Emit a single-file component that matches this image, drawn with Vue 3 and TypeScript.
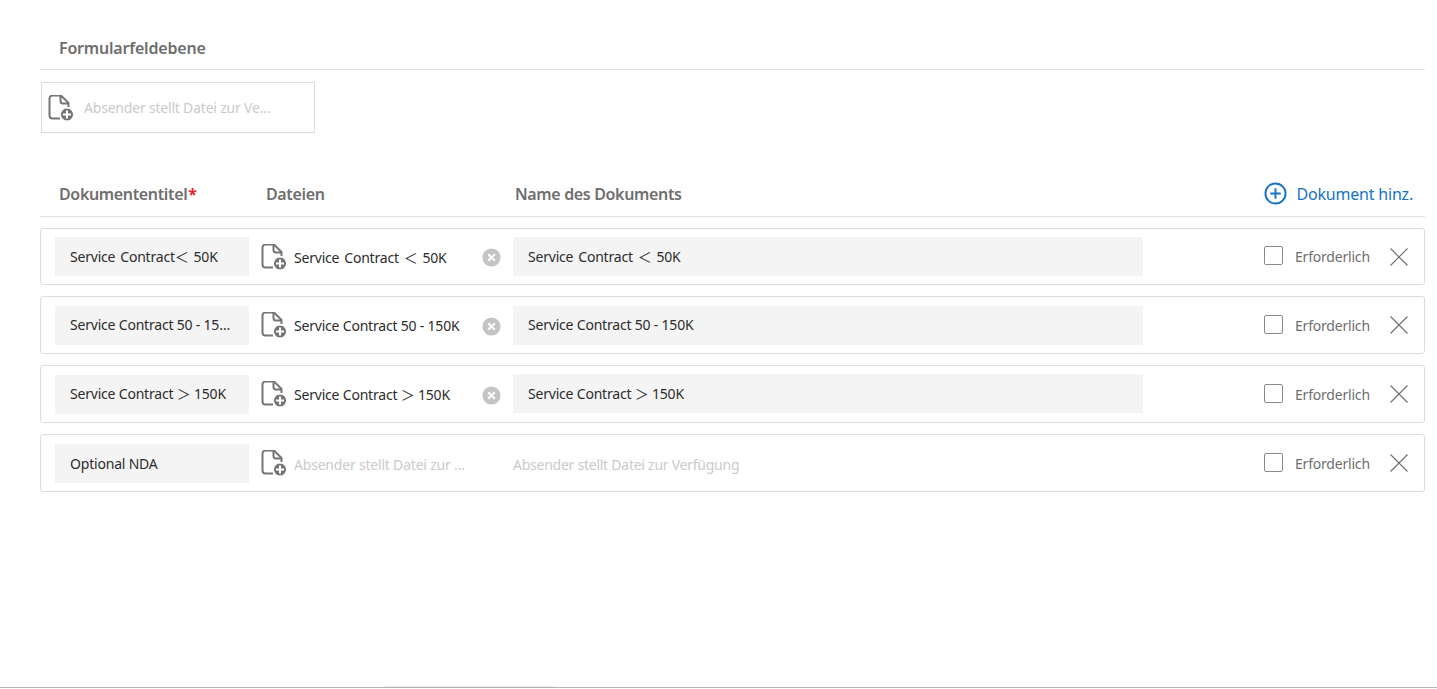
<script setup lang="ts">
interface Doc {
  title: string;
  file: string;
  name: string;
  empty?: boolean;
}

const docs: Doc[] = [
  { title: 'Service Contract＜ 50K', file: 'Service Contract ＜ 50K', name: 'Service Contract ＜ 50K' },
  { title: 'Service Contract 50 - 150K', file: 'Service Contract 50 - 150K', name: 'Service Contract 50 - 150K' },
  { title: 'Service Contract ＞ 150K', file: 'Service Contract ＞ 150K', name: 'Service Contract ＞ 150K' },
  { title: 'Optional NDA', file: 'Absender stellt Datei zur Verfügung', name: 'Absender stellt Datei zur Verfügung', empty: true },
];
</script>

<template>
  <div class="page">
    <h2 class="section">Formularfeldebene</h2>
    <div class="field-box">
      <svg class="file-icon" viewBox="0 0 26 26">
        <path d="M12 23.500H4.500a3 3 0 0 1-3-3V3.500a3 3 0 0 1 3-3h8.500L20.500 8v4" />
        <path d="M12.500 .5v5.500a2.500 2.500 0 0 0 2.500 2.500h5.500" />
        <circle class="disc" cx="19" cy="19.500" r="6.500" />
        <path class="plus" d="M19 15.500v8M15 19.500h8" />
      </svg>
      <span class="placeholder truncate">Absender stellt Datei zur Verfügung</span>
    </div>

    <div class="head">
      <div class="head-title">Dokumententitel<span class="star">*</span></div>
      <div class="head-files">Dateien</div>
      <div class="head-name">Name des Dokuments</div>
      <button class="add">
        <svg class="add-icon" viewBox="0 0 24 24">
          <circle cx="12" cy="12" r="10.500" />
          <path d="M12 6.500v11M6.500 12h11" />
        </svg>
        Dokument hinz.
      </button>
    </div>

    <div class="rows">
      <div v-for="doc in docs" :key="doc.title" class="row">
        <div class="title-input"><span class="truncate">{{ doc.title }}</span></div>
        <div class="files">
          <svg class="file-icon" viewBox="0 0 26 26">
            <path d="M12 23.500H4.500a3 3 0 0 1-3-3V3.500a3 3 0 0 1 3-3h8.500L20.500 8v4" />
            <path d="M12.500 .5v5.500a2.500 2.500 0 0 0 2.500 2.500h5.500" />
            <circle class="disc" cx="19" cy="19.500" r="6.500" />
            <path class="plus" d="M19 15.500v8M15 19.500h8" />
          </svg>
          <span class="file-name truncate" :class="{ placeholder: doc.empty }">{{ doc.file }}</span>
          <svg v-if="!doc.empty" class="clear" viewBox="0 0 20 20">
            <circle cx="10" cy="10" r="9.500" />
            <path d="M6.500 6.500l7 7M13.500 6.500l-7 7" />
          </svg>
        </div>
        <div v-if="doc.empty" class="name-empty placeholder">{{ doc.name }}</div>
        <div v-else class="name-input">{{ doc.name }}</div>
        <div class="check"></div>
        <span class="req">Erforderlich</span>
        <svg class="close" viewBox="0 0 18 18">
          <path d="M.5.5l17 17M17.500.5l-17 17" />
        </svg>
      </div>
    </div>

    <div class="bottom-line"></div>
  </div>
</template>

<style>
html,
body {
  margin: 0;
  background: #fff;
  overflow: hidden;
}
</style>

<style scoped>
.page {
  box-sizing: border-box;
  height: 689px;
  padding: 0 12px 0 40px;
  display: flex;
  flex-direction: column;
  font-family: 'Noto Sans', 'Noto Sans CJK SC', sans-serif;
  font-size: 14px;
  letter-spacing: -0.2px;
  color: #2c2c2c;
  position: relative;
}
.section {
  margin: 0;
  height: 70px;
  box-sizing: border-box;
  padding: 37px 0 0 19px;
  font-size: 16px;
  line-height: 22px;
  font-weight: 600;
  letter-spacing: -0.2px;
  color: #6e6e6e;
  border-bottom: 1px solid #e1e1e1;
}
.field-box {
  box-sizing: border-box;
  margin: 12px 0 0 1px;
  width: 274px;
  height: 51px;
  border: 1px solid #dcdcdc;
  display: flex;
  align-items: center;
  padding: 0 42px 0 6px;
  gap: 10px;
}
.file-icon {
  flex: none;
  width: 26px;
  height: 26px;
  fill: none;
  stroke: #757575;
  stroke-width: 2;
}
.disc {
  fill: #757575;
  stroke: #fff;
  stroke-width: 1;
}
.plus {
  stroke: #fff;
  stroke-width: 2;
}
.truncate {
  overflow: hidden;
  white-space: nowrap;
  text-overflow: ellipsis;
  min-width: 0;
}
.placeholder {
  color: #cacaca;
}
.head {
  margin-top: 38px;
  height: 46px;
  box-sizing: border-box;
  border-bottom: 1px solid #e1e1e1;
  display: flex;
  align-items: center;
  font-size: 16px;
  font-weight: 600;
  letter-spacing: -0.35px;
  color: #6e6e6e;
  padding: 0 12px 0 19px;
}
.head-title {
  width: 207px;
}
.star {
  color: #e3242b;
  font-weight: 700;
  margin-left: 1px;
}
.head-files {
  width: 249px;
}
.head-name {
  flex: 1;
}
.add {
  display: flex;
  align-items: center;
  gap: 9px;
  border: none;
  background: none;
  padding: 0;
  font: inherit;
  font-weight: 400;
  letter-spacing: -0.2px;
  color: #1473c6;
}
.add-icon {
  width: 23px;
  height: 23px;
  fill: none;
  stroke: #1473c6;
  stroke-width: 2;
}
.rows {
  margin-top: 11px;
  display: flex;
  flex-direction: column;
  gap: 11px;
}
.row {
  box-sizing: border-box;
  height: 58px;
  border: 1px solid #dcdcdc;
  border-radius: 3px;
  display: flex;
  align-items: center;
  padding: 0 16px 0 14px;
}
.row:first-child {
  height: 57px;
  word-spacing: 1.5px;
}
.title-input {
  box-sizing: border-box;
  width: 194px;
  height: 39px;
  background: #f4f4f4;
  padding: 0 15px 2px;
  display: flex;
  align-items: center;
}
.row:last-child .title-input {
  padding-bottom: 0;
}
.files {
  width: 264px;
  padding-left: 12px;
  box-sizing: border-box;
  display: flex;
  align-items: center;
}
.file-name {
  width: 173px;
  margin-left: 7px;
}
.row:last-child .file-name {
  padding-top: 2px;
}
.clear {
  width: 19px;
  height: 19px;
  margin: 2px 0 0 15px;
  flex: none;
}
.clear circle {
  fill: #c4c4c4;
}
.clear path {
  stroke: #fff;
  stroke-width: 2.2;
  fill: none;
}
.name-input {
  box-sizing: border-box;
  width: 630px;
  height: 39px;
  background: #f4f4f4;
  padding: 0 15px 2px;
  display: flex;
  align-items: center;
  white-space: pre;
}
.row:nth-child(3) .name-input {
  margin-bottom: 1px;
}
.name-empty {
  width: 630px;
  padding-top: 2px;
  letter-spacing: -0.25px;
}
.check {
  box-sizing: border-box;
  width: 19px;
  height: 19px;
  margin: 0 0 2px 121px;
  border: 1px solid #8a8a8a;
  border-radius: 2px;
}
.req {
  margin-left: 12px;
  color: #6e6e6e;
}
.close {
  width: 18px;
  height: 18px;
  margin-left: auto;
  fill: none;
  stroke: #6e6e6e;
  stroke-width: 1.1;
}
.bottom-line {
  position: absolute;
  left: 0;
  right: 0;
  top: 687px;
  height: 1px;
  background: #b4b4b4;
}
.bottom-line::before {
  content: '';
  position: absolute;
  left: 385px;
  width: 170px;
  top: -1px;
  height: 1px;
  background: #ececec;
}
</style>
